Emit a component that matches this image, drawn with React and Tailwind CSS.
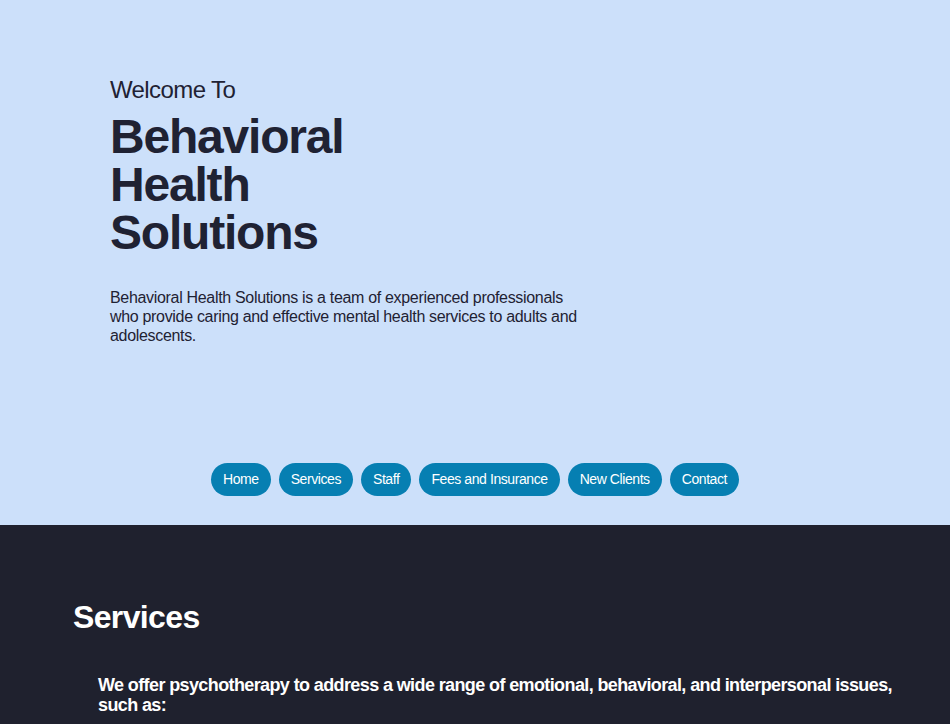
import React from "react";

const font = { fontFamily: '"Liberation Sans", Arial, sans-serif' };

export default function App() {
  const links = ["Home", "Services", "Staff", "Fees and Insurance", "New Clients", "Contact"];
  return (
    <div className="min-h-screen bg-[#1f212e]" style={font}>
      <section className="bg-[#cce0fa] text-[#1f2233] h-[525px] flex flex-col">
        <div className="pl-[110px] pt-[76px]">
          <p className="text-[24px] leading-[28px] tracking-[-0.025em]">Welcome To</p>
          <h1 className="mt-[9px] text-[48px] leading-[48px] font-bold tracking-[-0.025em]">
            Behavioral
            <br />
            Health
            <br />
            Solutions
          </h1>
          <p className="mt-[31px] w-[480px] text-[16px] leading-[19px] tracking-[-0.02em]">
            Behavioral Health Solutions is a team of experienced professionals who provide caring and effective mental health services to adults and adolescents.
          </p>
        </div>
        <nav className="mt-auto mb-[29px] flex justify-center gap-2">
          {links.map((l) => (
            <a
              key={l}
              href="#"
              className="h-[33px] px-[12px] flex items-center rounded-full bg-[#067fb2] text-white text-[14px] tracking-[-0.03em]"
            >
              {l}
            </a>
          ))}
        </nav>
      </section>
      <section className="bg-[#1f212e] text-white pt-[72px] pb-10">
        <h2 className="pl-[73px] text-[32px] leading-[40px] font-bold tracking-[-0.02em]">Services</h2>
        <p className="mt-[38px] pl-[98px] pr-[40px] text-[18px] leading-[20px] font-bold tracking-[-0.034em]">
          We offer psychotherapy to address a wide range of emotional, behavioral, and interpersonal issues, such as:
        </p>
      </section>
    </div>
  );
}
